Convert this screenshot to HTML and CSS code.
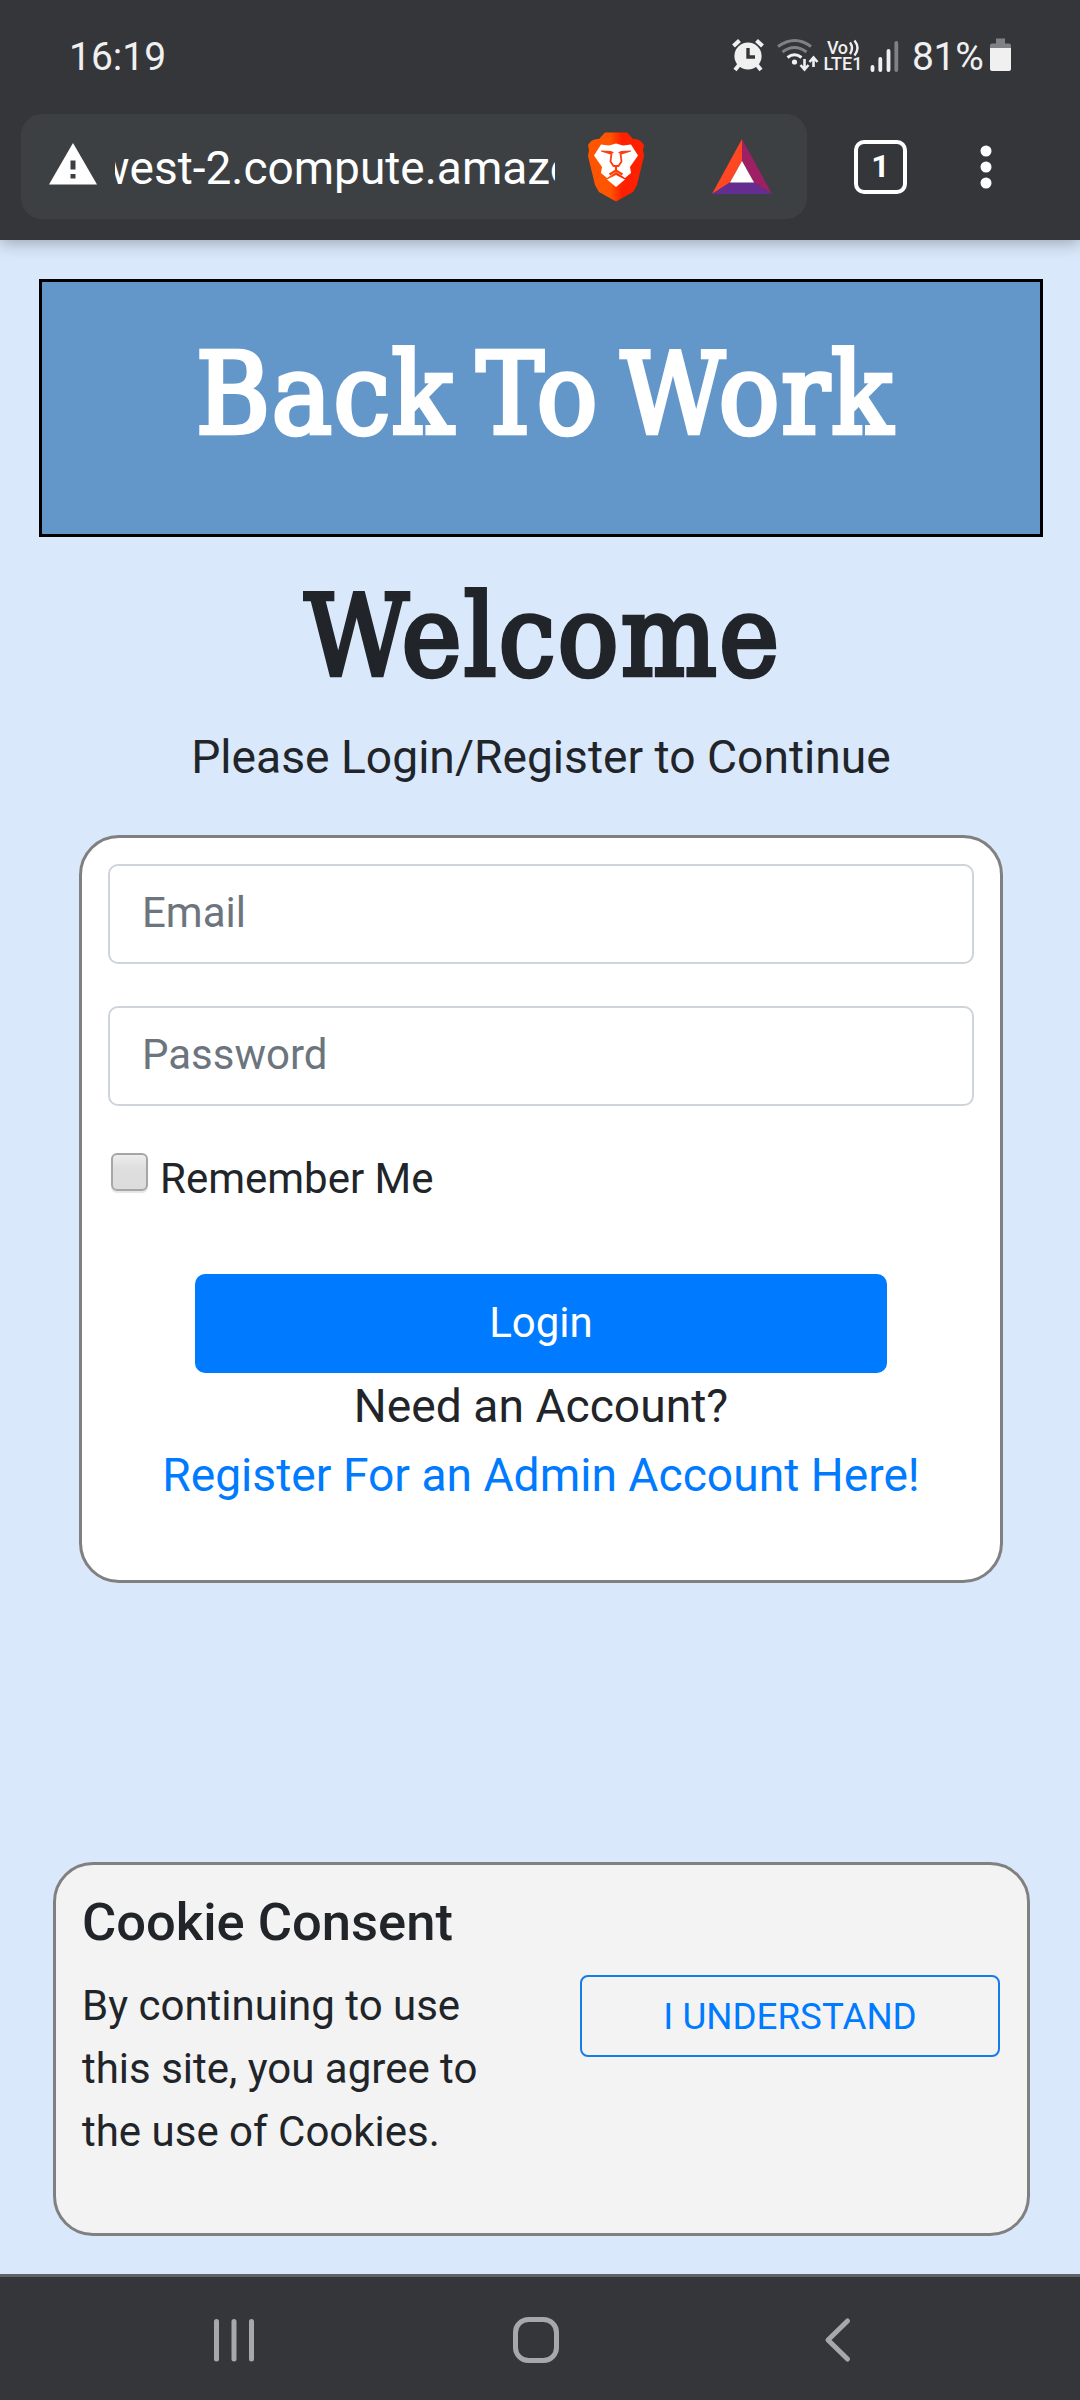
FILE: index.html
```html
<!DOCTYPE html>
<html lang="en">
<head>
<meta charset="utf-8">
<title>Back To Work</title>
<link rel="stylesheet" href="styles.css">
</head>
<body>
<header class="chrome">
  <div class="status">
    <span class="clock">16:19</span>
    <svg class="status-icons" width="176" height="40" viewBox="728 34 176 40">
      <g fill="#f0f0f0" stroke="#f0f0f0">
        <circle cx="748" cy="56" r="13.6" stroke="none"/>
        <path d="M733.500 46l6-5.500M762.500 46l-6-5.500" stroke-width="4.200"/>
        <path d="M739 65l-4 5M757 65l4 5" stroke-width="4"/>
        <path d="M748 48v9h7" fill="none" stroke="#35363a" stroke-width="3.400"/>
      </g>
      <g fill="none" stroke-width="3">
        <path d="M778 46.500q17-12 33 0" stroke="#808184"/>
        <path d="M782.500 52q12-9 24 0" stroke="#808184"/>
        <path d="M787.500 57.500q7-5.500 14 0" stroke="#f0f0f0"/>
        <circle cx="794.500" cy="62" r="2.600" fill="#f0f0f0" stroke="none"/>
        <path d="M804.500 59v9M800.500 65l4 4.500 4-4.500M813.500 67v-9M809.500 62l4-4.500 4 4.500" stroke="#f0f0f0" stroke-width="2.600"/>
        <path d="M850 42.500q4 5.500 0 11.500M854.500 40.500q6 7.500 0 15" stroke="#f0f0f0" stroke-width="2.400"/>
      </g>
      <text x="827" y="53.500" class="volte" textLength="21">Vo</text>
      <text x="823.500" y="70" class="volte" textLength="39">LTE1</text>
      <g stroke-width="3.800" stroke-linecap="round" stroke="#f0f0f0">
        <path d="M872.500 67v3M880.300 59v11M888.500 51v19"/>
        <path d="M896.300 43v27" stroke="#808184"/>
      </g>
    </svg>
    <span class="percent">81%</span>
    <svg class="battery" width="22" height="34" viewBox="0 0 22 34">
      <path d="M6 0.500h9v5h4q2 0 2 2v3H0v-3q0-2 2-2h4z" fill="#808184"/>
      <path d="M0 10h21v21q0 2-2 2H2q-2 0-2-2z" fill="#f0f0f0"/>
    </svg>
  </div>
  <div class="toolbar">
    <div class="omnibox">
      <svg class="warning" width="48" height="42" viewBox="0 0 48 42">
        <path d="M24 0L48 41.500H0z" fill="#fff"/>
        <path d="M21.500 17.500h5v9h-5zM21.500 31h5v4.500h-5z" fill="#3c4043"/>
      </svg>
      <div class="url"><span>west-2.compute.amazonaws</span></div>
      <svg class="brave" width="58" height="70" viewBox="0 0 58 70">
        <defs><linearGradient id="lion"><stop offset=".4" stop-color="#ff5500"/><stop offset=".6" stop-color="#ff2000"/></linearGradient></defs>
        <path d="M18 0.500h22l6 6.500q7-1 11 6l-1 5 1 6-7 29-4 7-17 9.500-17-9.500-4-7-7-29 1-6-1-5q4-7 11-6z" fill="url(#lion)"/>
        <path d="M14 12.500l8 1 7-2 7 2 8-1 7 11-8 11.500 1 6-6 5-9-6-9 6-6-5 1-6-8-11.500z" fill="#fff"/>
        <path d="M14 18.500l10 .5 3 1.500-3.500 2-9.500-3zM44 18.500l-10 .5-3 1.500 3.500 2 9.500-3z" fill="#ff3d0d"/>
        <path d="M24.500 21.500l-1 8 3 4.500h5l3-4.500-1-8" fill="none" stroke="#ff3d0d" stroke-width="1.800"/>
        <path d="M29 34v4.500l-6.500 4M29 38.500l6.500 4" fill="none" stroke="#ff3d0d" stroke-width="2.200"/>
        <path d="M29 43l9 4.500-9 7.500-9-7.500z" fill="#fff"/>
      </svg>
      <svg class="bat" width="60" height="56" viewBox="0 0 60 56">
        <path d="M30 0v22L18 43.500 0 55z" fill="#ff4724"/>
        <path d="M30 0l30 55-18-11.500L30 22z" fill="#9e1f63"/>
        <path d="M0 55l18-11.500h24L60 55z" fill="#662d91"/>
        <path d="M30 22l12 21.500H18z" fill="#fff"/>
      </svg>
    </div>
    <div class="tabs">1</div>
    <svg class="menu" width="12" height="46" viewBox="0 0 12 46" fill="#fff">
      <circle cx="6" cy="7" r="5.500"/><circle cx="6" cy="23" r="5.500"/><circle cx="6" cy="39" r="5.500"/>
    </svg>
  </div>
</header>

<main class="page">
  <div class="banner"><h1>Back To Work</h1></div>
  <h1 class="welcome">Welcome</h1>
  <p class="lead">Please Login/Register to Continue</p>
  <form class="login-card">
    <input class="field" type="email" placeholder="Email">
    <input class="field" type="password" placeholder="Password">
    <label class="remember"><input class="check" type="checkbox"><span>Remember Me</span></label>
    <button class="login" type="button">Login</button>
    <p class="account">Need an Account?<br><a href="#">Register For an Admin Account Here!</a></p>
  </form>
  <section class="cookies">
    <h5>Cookie Consent</h5>
    <div class="cookie-row">
      <p>By continuing to use this site, you agree to the use of Cookies.</p>
      <button class="understand" type="button">I UNDERSTAND</button>
    </div>
  </section>
</main>

<nav class="navbar">
  <svg width="42" height="46" viewBox="0 0 42 46" stroke="#a8a8aa" stroke-width="5" stroke-linecap="round"><path d="M3.500 4.500v37.500M21 4.500v37.500M38.500 4.500v37.500"/></svg>
  <svg width="48" height="48" viewBox="0 0 48 48" fill="none" stroke="#a8a8aa" stroke-width="5"><rect x="3.500" y="3.500" width="41" height="41" rx="13"/></svg>
  <svg width="28" height="46" viewBox="0 0 28 46" fill="none" stroke="#a8a8aa" stroke-width="5" stroke-linecap="round" stroke-linejoin="round"><path d="M23.500 4L4 23l19.500 19"/></svg>
</nav>
</body>
</html>
```

FILE: styles.css
```css
* { box-sizing: border-box; }

body {
  margin: 0;
  width: 1080px;
  height: 2400px;
  display: flex;
  flex-direction: column;
  overflow: hidden;
  background: #d9e8fb;
  color: #212529;
  font-family: Roboto, sans-serif;
  font-size: 42px;
  line-height: 1.5;
}

h1, h5, p { margin: 0; }
svg { display: block; flex: none; }

.chrome {
  height: 240px;
  flex: none;
  background: #35363a;
  box-shadow: 0 2px 16px rgba(0, 0, 0, .32);
  z-index: 1;
}

.status {
  height: 114px;
  display: flex;
  align-items: flex-start;
  padding: 34px 68px 0 69px;
  color: #f0f0f0;
  font-size: 39px;
  line-height: 46px;
}
.clock { flex: 1; }
.volte { font: 500 18px Roboto, sans-serif; fill: #f0f0f0; }
.percent { width: 82px; padding-left: 8px; white-space: nowrap; letter-spacing: -.3px; }
.battery { margin-top: 4px; margin-left: 4px; }

.toolbar { display: flex; align-items: center; height: 105px; padding-left: 21px; }
.omnibox {
  width: 786px;
  height: 105px;
  display: flex;
  align-items: center;
  padding-left: 28px;
  border-radius: 21px;
  background: #3c4043;
}
.warning { margin-top: -6px; }
.url {
  width: 440px;
  margin: 4px 0 0 18px;
  overflow: hidden;
  color: #fff;
  font-size: 46px;
  white-space: nowrap;
}
.url span { margin-left: -20px; }
.brave { margin-left: 32px; }
.bat { margin-left: 67px; }
.tabs {
  width: 53px;
  height: 54px;
  margin-left: 47px;
  border: 4px solid #fff;
  border-radius: 10px;
  color: #fff;
  font-size: 32px;
  font-weight: 700;
  line-height: 45px;
  text-align: center;
}
.menu { margin-left: 73px; }

.page {
  flex: 1;
  display: flex;
  flex-direction: column;
  align-items: center;
  padding: 39px 0 0 2px;
}
.banner {
  width: 1004px;
  height: 258px;
  padding: 32px 0 0 8px;
  border: 3px solid #000;
  background: #6397ca;
  color: #fff;
}
h1 {
  font-family: "DejaVu Serif Condensed", "DejaVu Serif", serif;
  font-stretch: condensed;
  font-size: 112px;
  font-weight: 400;
  line-height: 160px;
  text-align: center;
  white-space: nowrap;
  letter-spacing: 1.800px;
  word-spacing: -12px;
  -webkit-text-stroke: 4.500px currentColor;
}
.welcome { margin-top: 19px; padding-left: 4px; letter-spacing: 2.600px; }
.lead { margin-top: 7px; font-size: 46.200px; line-height: 69px; }

.login-card {
  width: 924px;
  height: 748px;
  margin-top: 43px;
  padding: 26px;
  display: flex;
  flex-direction: column;
  border: 3px solid #808080;
  border-radius: 40px;
  background: #fff;
}
.field {
  width: 866px;
  height: 100px;
  flex: none;
  margin: 0 0 42px;
  padding: 0 32px 4px;
  border: 2px solid #ced4da;
  border-radius: 10px;
  font: inherit;
}
.field::placeholder { color: #6c757d; opacity: 1; }
.remember { display: flex; height: 63px; align-items: center; margin-top: -1px; }
.check {
  appearance: none;
  width: 37px;
  height: 38px;
  margin: -13px 12px 0 3px;
  border: 2px solid #a6a6a6;
  border-radius: 6px;
  background: linear-gradient(#ededed, #dedede 40%, #dcdcdc);
  box-shadow: 0 2px 1px rgba(0, 0, 0, .1);
}
.login {
  width: 692px;
  height: 99px;
  margin: 64px auto 0;
  padding: 0 0 3px;
  border: 0;
  border-radius: 10px;
  background: #007bff;
  color: #fff;
  font: inherit;
}
.account { margin-top: -1px; font-size: 46.200px; line-height: 69px; text-align: center; }
.account a { color: #007bff; text-decoration: none; }

.cookies {
  width: 977px;
  height: 374px;
  margin: 279px 0 0 1px;
  padding: 26px 27px 25px 26px;
  border: 3px solid #808080;
  border-radius: 40px;
  background: #f3f3f3;
}
.cookies h5 { font-size: 52.500px; font-weight: 500; line-height: 63px; }
.cookie-row { display: flex; justify-content: space-between; margin-top: 20px; }
.cookie-row p { width: 420px; }
.understand {
  width: 420px;
  height: 82px;
  margin-top: 1px;
  padding: 0;
  border: 2px solid #187bea;
  border-radius: 8px;
  background: none;
  color: #007bff;
  font: 36.750px Roboto, sans-serif;
}

.navbar {
  height: 126px;
  flex: none;
  display: flex;
  align-items: center;
  padding: 2px 0 0 213px;
  border-top: 3px solid #5f6368;
  background: #35363a;
}
.navbar svg + svg { margin-left: 257px; }
.navbar svg:last-child { margin-left: 264px; }
```
